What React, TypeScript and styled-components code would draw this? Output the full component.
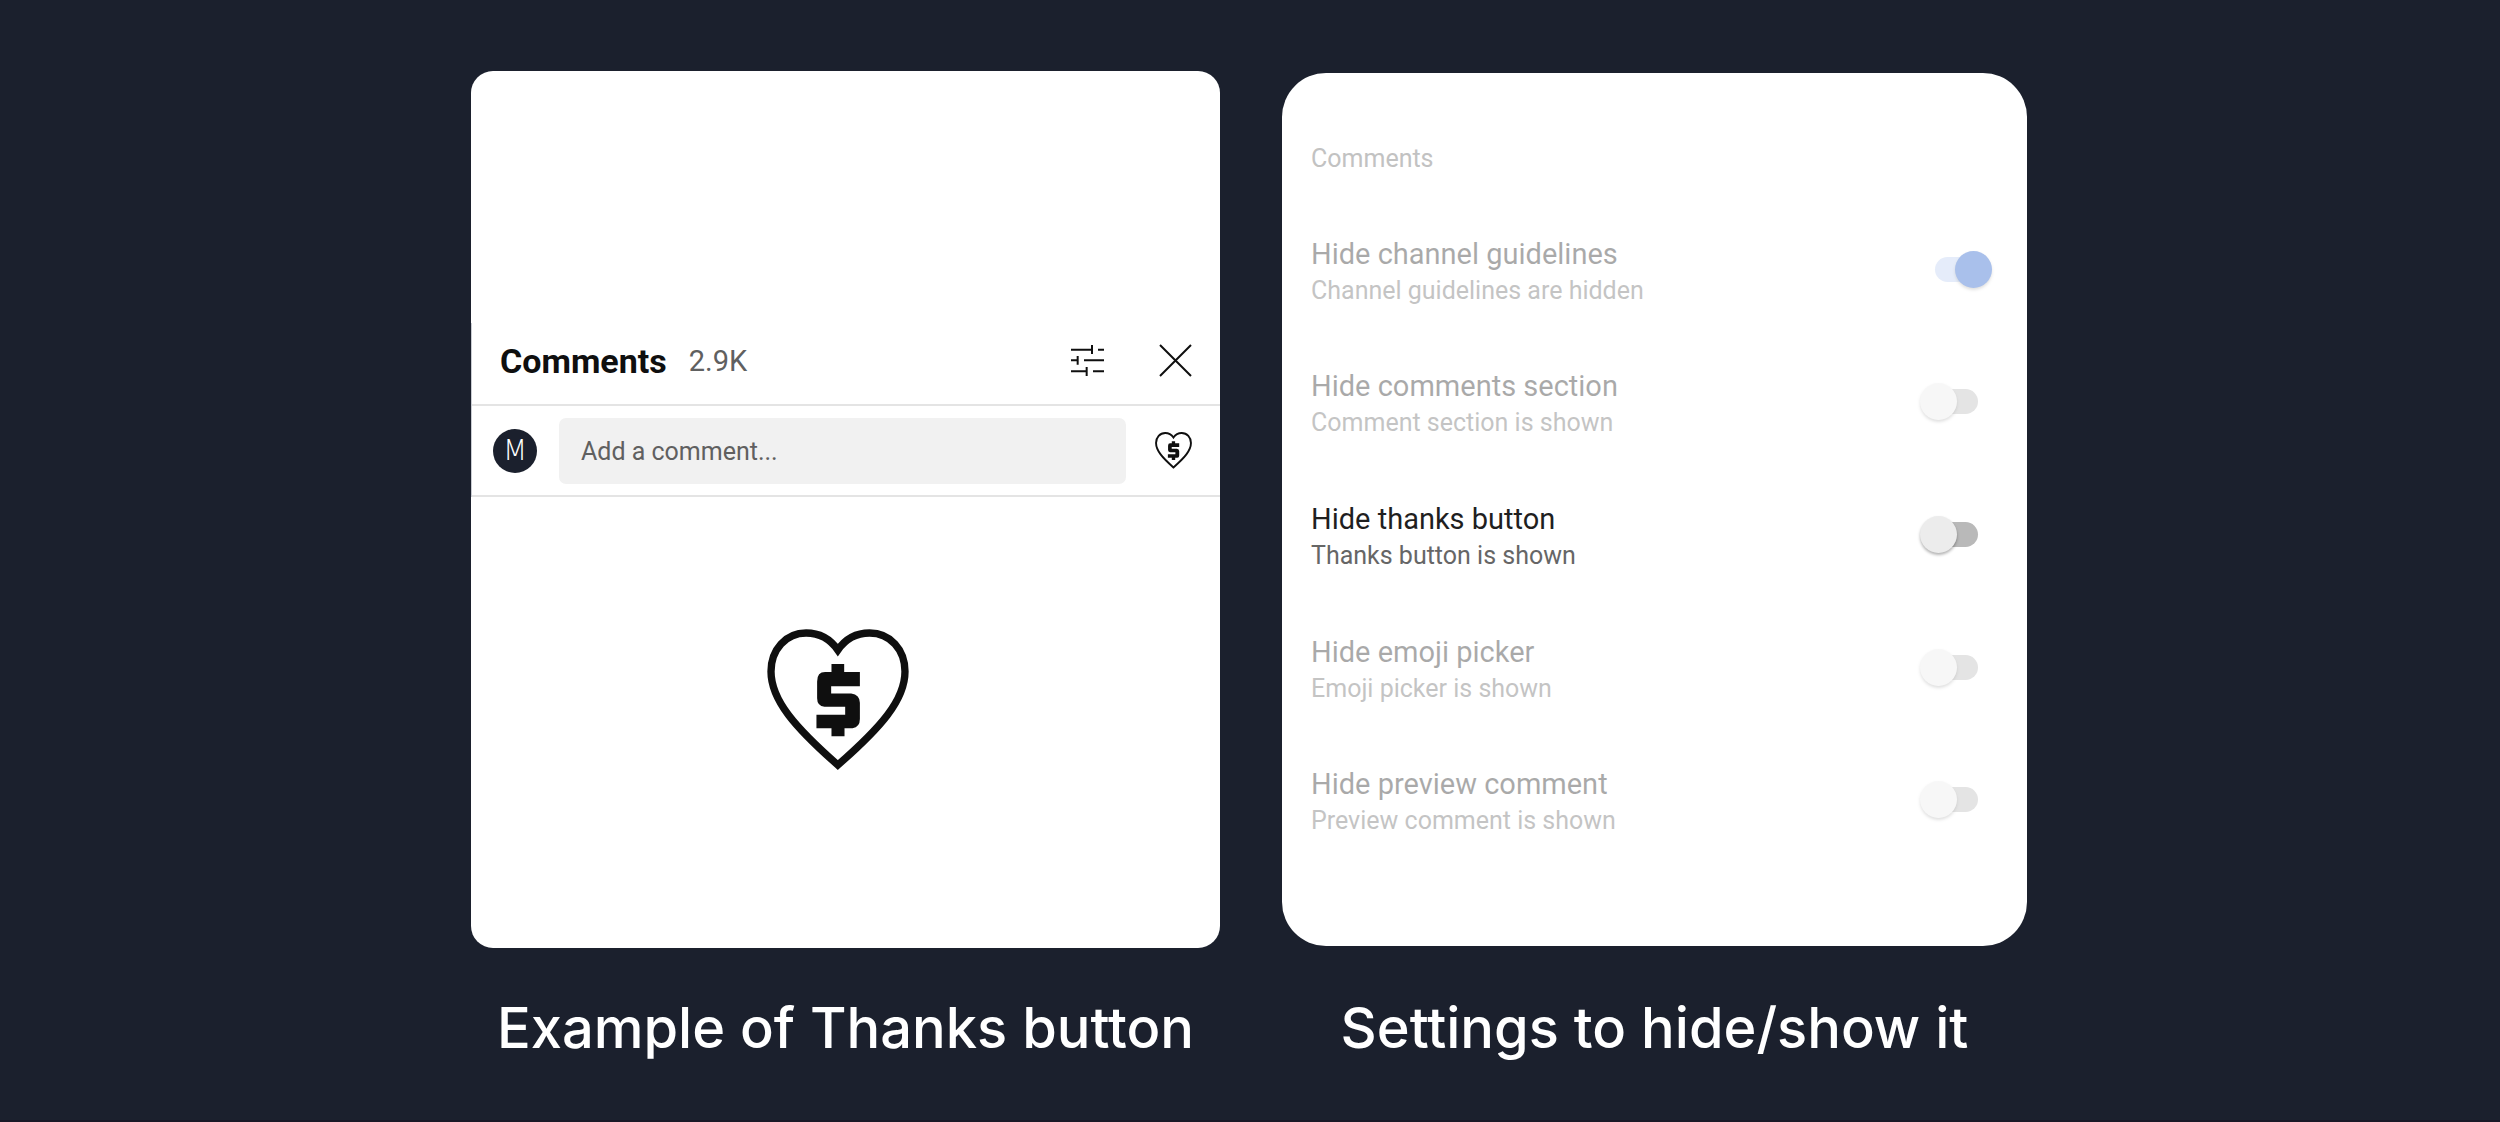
import React, { useState } from "react";
import styled, { createGlobalStyle } from "styled-components";

const GlobalStyle = createGlobalStyle`
  *, *::before, *::after { box-sizing: border-box; }
  body {
    margin: 0;
    background: #1b202d;
    font-family: Roboto, "Liberation Sans", sans-serif;
  }
  h1, h2, p, figure { margin: 0; }
  svg { display: block; }
`;

const Page = styled.main`
  display: flex;
  justify-content: center;
  align-items: stretch;
  gap: 62px;
  min-height: 100vh;
  padding: 71px 34px 56px 32px;
  border-bottom: 2px solid #191826;
`;

const Figure = styled.figure<{ $max: number }>`
  display: flex;
  flex-direction: column;
  flex: 1 1 0;
  min-width: 0;
  max-width: ${(p) => p.$max}px;
`;

const Caption = styled.figcaption`
  padding-top: 44px;
  color: #ffffff;
  font: 500 56px/72px Inter, "Liberation Sans", sans-serif;
  text-align: center;
  white-space: nowrap;
`;

const PreviewCard = styled.section`
  flex: 1;
  padding-top: 252px;
  border-radius: 22px;
  background: #ffffff;
`;

const Panel = styled.div`
  border-left: 1px solid #c9ccd2;
`;

const PanelHeader = styled.header`
  display: flex;
  align-items: center;
  height: 83px;
  padding: 0 28px 6px;
  border-bottom: 2px solid #e4e4e4;
`;

const PanelTitle = styled.h1`
  color: #0f0f0f;
  font-size: 34px;
  line-height: 40px;
  font-weight: 700;
`;

const Count = styled.span`
  flex: 1;
  padding-left: 22px;
  color: #606060;
  font-size: 29px;
  line-height: 40px;
`;

const IconButton = styled.button`
  display: flex;
  padding: 0;
  border: 0;
  background: none;
  color: #0f0f0f;
  cursor: pointer;
`;

const HeaderActions = styled.div`
  display: flex;
  align-items: center;
  gap: 55px;
`;

const ComposeRow = styled.form`
  display: flex;
  align-items: center;
  height: 91px;
  padding: 0 28px 0 21px;
  border-bottom: 2px solid #e4e4e4;
`;

const Avatar = styled.span`
  display: flex;
  align-items: center;
  justify-content: center;
  flex: none;
  width: 44px;
  height: 44px;
  margin-right: 22px;
  border-radius: 50%;
  background: #1b202d;
  color: #ffffff;
  font: 200 28px/32px "DejaVu Sans", sans-serif;
`;

const CommentInput = styled.input`
  flex: 1;
  min-width: 0;
  height: 66px;
  margin-right: 29px;
  padding: 2px 22px 0;
  border: 0;
  border-radius: 7px;
  background: #f1f1f1;
  color: #0f0f0f;
  font: 400 25px/32px Roboto, "Liberation Sans", sans-serif;
  &::placeholder { color: #606060; opacity: 1; }
`;

const Highlight = styled.div`
  display: flex;
  justify-content: center;
  padding: 132px 16px 0 0;
  color: #0f0f0f;
`;

const SettingsCard = styled.section`
  display: flex;
  flex-direction: column;
  flex: 1;
  margin: 2px 0;
  padding: 70px 35px 80px 29px;
  border-radius: 44px;
  background: #ffffff;
`;

const SettingsHeading = styled.h2`
  height: 60px;
  color: #c2c2c2;
  font-size: 25px;
  line-height: 32px;
  font-weight: 400;
`;

const SettingsList = styled.div`
  display: flex;
  flex-direction: column;
  flex: 1;
`;

const SettingRow = styled.label<{ $dim: boolean }>`
  display: flex;
  align-items: center;
  justify-content: space-between;
  flex: 1;
  opacity: ${(p) => (p.$dim ? 0.38 : 1)};
  cursor: pointer;
`;

const SettingText = styled.div`
  padding-top: 5px;
`;

const SettingTitle = styled.p`
  color: #1f1f1f;
  font-size: 29px;
  line-height: 38px;
`;

const SettingStatus = styled.p`
  color: #666666;
  font-size: 25px;
  line-height: 36px;
`;

const Switch = styled.input`
  appearance: none;
  display: grid;
  align-items: center;
  flex: none;
  width: 72px;
  height: 37px;
  margin: 0;
  cursor: pointer;
  &::before, &::after { content: ""; grid-area: 1 / 1; }
  &::before {
    width: 50px;
    height: 25px;
    margin-left: 8px;
    border-radius: 13px;
    background: #b9b9b9;
  }
  &::after {
    width: 37px;
    height: 37px;
    border-radius: 50%;
    background: #ececec;
    box-shadow: 0 2px 3px rgba(0, 0, 0, 0.3);
  }
  &:checked::before { margin-left: 15px; background: #bccff2; }
  &:checked::after { margin-left: 35px; background: #1f5bcc; }
`;

const HeartIcon = ({ size }: { size: number }) => (
  <svg width={size} height={size} viewBox="80 87 425 425" aria-hidden="true">
    <path
      d="M292 150C270 118 236 99 197 99C137 99 92 148 92 214C92 300 165 382 292 494C420 382 493 300 493 214C493 148 448 99 387 99C348 99 314 118 292 150Z"
      fill="none"
      stroke="currentColor"
      strokeWidth="22"
    />
    <path
      d="M273 192h38v24h47v42h-86v22h60q26 4 26 28v48q0 24-22 28h-24v24h-39v-24h-45v-40h86v-24h-62q-22-3-22-26v-50q0-28 24-28h19z"
      fill="currentColor"
    />
  </svg>
);

const TuneIcon = () => (
  <svg width="33" height="31" viewBox="156 102 99 93" aria-hidden="true">
    <path
      d="M156 116H219M219 102V129M237 116H255M156 148H176M176 135V161M195 148H255M156 181H203M203 168V195M222 181H255"
      fill="none"
      stroke="currentColor"
      strokeWidth="6"
    />
  </svg>
);

const CloseIcon = () => (
  <svg width="33" height="33" viewBox="0 0 33 33" aria-hidden="true">
    <path d="M1 1L32 32M32 1L1 32" fill="none" stroke="currentColor" strokeWidth="2" />
  </svg>
);

const settings = [
  { id: "guidelines", title: "Hide channel guidelines", status: "Channel guidelines are hidden", on: true },
  { id: "section", title: "Hide comments section", status: "Comment section is shown" },
  { id: "thanks", title: "Hide thanks button", status: "Thanks button is shown", active: true },
  { id: "emoji", title: "Hide emoji picker", status: "Emoji picker is shown" },
  { id: "preview", title: "Hide preview comment", status: "Preview comment is shown" },
];

const Setting = ({ item }: { item: (typeof settings)[number] }) => {
  const [on, setOn] = useState(Boolean(item.on));
  return (
    <SettingRow htmlFor={item.id} $dim={!item.active}>
      <SettingText>
        <SettingTitle>{item.title}</SettingTitle>
        <SettingStatus>{item.status}</SettingStatus>
      </SettingText>
      <Switch id={item.id} type="checkbox" role="switch" checked={on} onChange={() => setOn(!on)} />
    </SettingRow>
  );
};

export default function App() {
  return (
    <>
      <GlobalStyle />
      <Page>
        <Figure $max={749}>
          <PreviewCard>
            <Panel>
              <PanelHeader>
                <PanelTitle>Comments</PanelTitle>
                <Count>2.9K</Count>
                <HeaderActions>
                  <IconButton type="button" aria-label="Filter comments"><TuneIcon /></IconButton>
                  <IconButton type="button" aria-label="Close"><CloseIcon /></IconButton>
                </HeaderActions>
              </PanelHeader>
              <ComposeRow onSubmit={(e) => e.preventDefault()}>
                <Avatar>M</Avatar>
                <CommentInput type="text" aria-label="Add a comment" placeholder="Add a comment..." />
                <IconButton type="button" aria-label="Thanks"><HeartIcon size={37} /></IconButton>
              </ComposeRow>
            </Panel>
            <Highlight><HeartIcon size={142} /></Highlight>
          </PreviewCard>
          <Caption>Example of Thanks button</Caption>
        </Figure>
        <Figure $max={745}>
          <SettingsCard>
            <SettingsHeading>Comments</SettingsHeading>
            <SettingsList>
              {settings.map((item) => <Setting key={item.id} item={item} />)}
            </SettingsList>
          </SettingsCard>
          <Caption>Settings to hide/show it</Caption>
        </Figure>
      </Page>
    </>
  );
}
